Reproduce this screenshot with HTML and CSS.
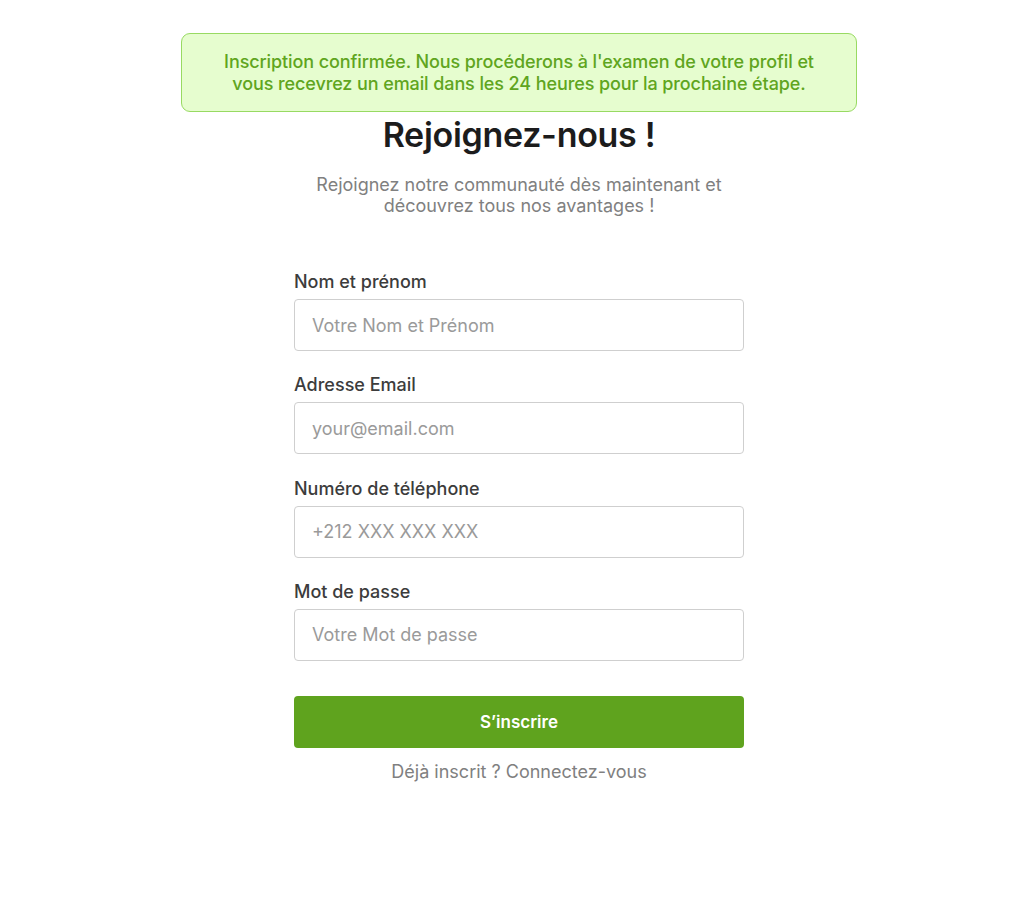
FILE: index.html
```html
<!DOCTYPE html>
<html lang="fr">
<head>
<meta charset="utf-8">
<title>Rejoignez-nous</title>
<link rel="stylesheet" href="styles.css">
</head>
<body>
<div class="alert">Inscription confirmée. Nous procéderons à l'examen de votre profil et vous recevrez un email dans les 24 heures pour la prochaine étape.</div>
<main class="page">
  <h1 class="title">Rejoignez-nous !</h1>
  <p class="subtitle">Rejoignez notre communauté dès maintenant et<br>découvrez tous nos avantages !</p>
  <form class="form">
    <div class="field">
      <label class="label" for="name">Nom et prénom</label>
      <input class="input" id="name" type="text" placeholder="Votre Nom et Prénom">
    </div>
    <div class="field">
      <label class="label" for="email">Adresse Email</label>
      <input class="input" id="email" type="email" placeholder="your@email.com">
    </div>
    <div class="field">
      <label class="label" for="phone">Numéro de téléphone</label>
      <input class="input" id="phone" type="tel" placeholder="+212 XXX XXX XXX">
    </div>
    <div class="field">
      <label class="label" for="pwd">Mot de passe</label>
      <input class="input" id="pwd" type="password" placeholder="Votre Mot de passe">
    </div>
    <button class="submit" type="button">S’inscrire</button>
    <p class="login">Déjà inscrit ? Connectez-vous</p>
  </form>
</main>
</body>
</html>
```
FILE: styles.css
```css
* { box-sizing: border-box; }
html, body { margin: 0; padding: 0; background: #fff; }
body {
  font-family: Inter, "Noto Sans", sans-serif;
  color: #1a1a1a;
}
.alert {
  position: absolute;
  top: 33px;
  left: 181px;
  width: 676px;
  padding: 17px 24px 16px;
  background: #e6fdcf;
  border: 1px solid #98da62;
  border-radius: 9px;
  color: #5fa520;
  font-size: 18px;
  font-weight: 500;
  line-height: 22px;
  letter-spacing: -0.1px;
  text-align: center;
}
.page {
  margin-left: 23px;
  display: flex;
  flex-direction: column;
  align-items: center;
  padding-top: 116px;
}
.title {
  margin: 0;
  font-size: 34px;
  font-weight: 600;
  line-height: 38px;
  color: #1c1c1c;
  letter-spacing: -0.3px;
}
.subtitle {
  margin: 20px 0 0;
  font-size: 18px;
  line-height: 21px;
  color: #808080;
  text-align: center;
}
.form {
  width: 450px;
  margin-top: 52px;
  display: flex;
  flex-direction: column;
}
.field {
  display: flex;
  flex-direction: column;
  margin-bottom: 20.33px;
}
.label {
  font-size: 18px;
  font-weight: 500;
  line-height: 24px;
  color: #3c3c3c;
  padding-top: 2px;
  margin-bottom: 5px;
}
.input {
  height: 52px;
  width: 100%;
  padding: 0 17px;
  border: 1px solid #cfcfcf;
  border-radius: 4px;
  font-family: inherit;
  font-size: 18px;
  color: #333;
  background: #fff;
  outline: none;
}
.input::placeholder { color: #9a9a9a; }
.submit {
  margin-top: 14.67px;
  height: 52px;
  width: 100%;
  border: 0;
  border-radius: 4px;
  background: #5fa31e;
  color: #fff;
  font-family: inherit;
  font-size: 17px;
  font-weight: 600;
  padding-top: 2px;
  cursor: pointer;
}
.login {
  margin: 12px 0 0;
  font-size: 18px;
  line-height: 24px;
  color: #808080;
  text-align: center;
}
```
